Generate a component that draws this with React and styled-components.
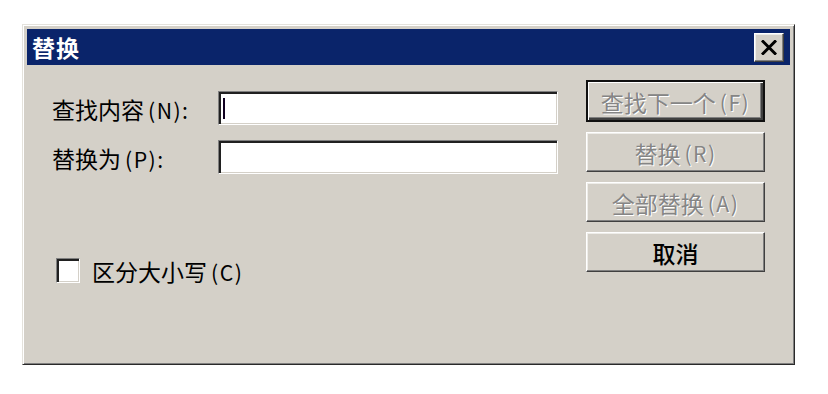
import React from "react";
import styled, { createGlobalStyle } from "styled-components";

const Global = createGlobalStyle`
  html, body { margin: 0; padding: 0; background: #ffffff; }
  body { font-family: "Noto Sans CJK SC", "Noto Sans", sans-serif; }
`;

const Page = styled.div`
  width: 828px;
  height: 394px;
  padding: 24px 0 0 22px;
  box-sizing: border-box;
  background: #ffffff;
`;

const Window = styled.div`
  width: 773px;
  height: 341px;
  box-sizing: border-box;
  background: #d4d0c8;
  border-style: solid;
  border-width: 1px;
  border-color: #e4e2dc #2a2a2a #2a2a2a #e4e2dc;
  box-shadow: inset 1px 1px 0 #ffffff, inset -1px -1px 0 #808080;
  padding: 4px;
  display: flex;
  flex-direction: column;
`;

const TitleBar = styled.div`
  height: 36px;
  flex: none;
  background: #0a246a;
  display: flex;
  align-items: center;
  justify-content: space-between;
  padding: 0 6px 0 5px;
`;

const TitleText = styled.span`
  color: #ffffff;
  font-weight: 700;
  font-size: 23px;
  line-height: 1;
  letter-spacing: 1px;
`;

const CloseButton = styled.button`
  width: 30px;
  height: 29px;
  padding: 0;
  margin: 0;
  background: #d4d0c8;
  border-style: solid;
  border-width: 1px;
  border-color: #ffffff #404040 #404040 #ffffff;
  box-shadow: inset -1px -1px 0 #808080, inset 1px 1px 0 #eeede9;
  display: flex;
  align-items: center;
  justify-content: center;
`;

const Content = styled.div`
  flex: 1;
  display: flex;
  gap: 28px;
  padding: 15px 25px 0 25px;
`;

const LeftColumn = styled.div`
  width: 506px;
  padding-top: 11px;
  display: flex;
  flex-direction: column;
  gap: 15px;
`;

const FieldRow = styled.div`
  display: flex;
  align-items: center;
  height: 34px;
`;

const Label = styled.label`
  width: 166px;
  flex: none;
  font-size: 23px;
  line-height: 1;
  color: #000000;
  padding-top: 2px;
  white-space: nowrap;
`;

const Key = styled.span`
  padding-left: 4px;
  letter-spacing: 1.5px;
  font-size: 0.92em;
`;

const TextBox = styled.div`
  flex: 1;
  height: 34px;
  box-sizing: border-box;
  background: #ffffff;
  border-style: solid;
  border-width: 1px;
  border-color: #808080 #ffffff #ffffff #808080;
  box-shadow: inset 2px 2px 0 #202020, inset -1px -1px 0 #d4d0c8;
  display: flex;
  align-items: center;
  padding-left: 4px;
`;

const Caret = styled.span`
  width: 2px;
  height: 21px;
  background: #100020;
`;

const CheckRow = styled.div`
  margin-top: 69px;
  margin-left: 4px;
  display: flex;
  align-items: center;
  gap: 12px;
`;

const CheckBox = styled.span`
  width: 24px;
  height: 25px;
  box-sizing: border-box;
  background: #ffffff;
  border-style: solid;
  border-width: 1px;
  border-color: #808080 #ffffff #ffffff #808080;
  box-shadow: inset 2px 2px 0 #202020, inset -1px -1px 0 #d4d0c8;
`;

const CheckLabel = styled.span`
  font-size: 23px;
  line-height: 1;
  color: #000000;
  padding-top: 2px;
`;

const RightColumn = styled.div`
  width: 179px;
  display: flex;
  flex-direction: column;
  gap: 10px;
`;

const Button = styled.button`
  height: ${(p) => (p.$default ? "42px" : "40px")};
  width: 100%;
  box-sizing: border-box;
  margin: 0;
  padding: 2px 0 0 0;
  font-family: "Noto Sans CJK SC", "Noto Sans", sans-serif;
  font-size: 23px;
  line-height: 1;
  font-weight: ${(p) => (p.$disabled ? 400 : 500)};
  background: #d4d0c8;
  color: ${(p) => (p.$disabled ? "#858585" : "#000000")};
  text-shadow: ${(p) => (p.$disabled ? "1px 1px 0 #ffffff" : "none")};
  border-style: solid;
  border-width: ${(p) => (p.$default ? "2px" : "1px")};
  border-color: ${(p) =>
    p.$default ? "#101010" : "#ffffff #404040 #404040 #ffffff"};
  box-shadow: ${(p) =>
    p.$default
      ? "inset 1px 1px 0 #ffffff, inset -2px -2px 0 #404040, inset -3px -3px 0 #808080"
      : "inset -1px -1px 0 #808080, inset 1px 1px 0 #eeede9"};
  display: flex;
  align-items: center;
  justify-content: center;
  white-space: nowrap;
  cursor: default;
`;

const CloseIcon = () => (
  <svg width="16" height="15" viewBox="0 0 16 15">
    <path d="M2 1.5 L14 13.5 M14 1.5 L2 13.5" stroke="#000" strokeWidth="3" strokeLinecap="square" fill="none" />
  </svg>
);

export default function App() {
  return (
    <>
      <Global />
      <Page>
        <Window>
          <TitleBar>
            <TitleText>替换</TitleText>
            <CloseButton aria-label="关闭">
              <CloseIcon />
            </CloseButton>
          </TitleBar>
          <Content>
            <LeftColumn>
              <FieldRow>
                <Label>查找内容<Key>(N):</Key></Label>
                <TextBox>
                  <Caret />
                </TextBox>
              </FieldRow>
              <FieldRow>
                <Label>替换为<Key>(P):</Key></Label>
                <TextBox />
              </FieldRow>
              <CheckRow>
                <CheckBox />
                <CheckLabel>区分大小写<Key>(C)</Key></CheckLabel>
              </CheckRow>
            </LeftColumn>
            <RightColumn>
              <Button $default $disabled>查找下一个<Key>(F)</Key></Button>
              <Button $disabled>替换<Key>(R)</Key></Button>
              <Button $disabled>全部替换<Key>(A)</Key></Button>
              <Button>取消</Button>
            </RightColumn>
          </Content>
        </Window>
      </Page>
    </>
  );
}
